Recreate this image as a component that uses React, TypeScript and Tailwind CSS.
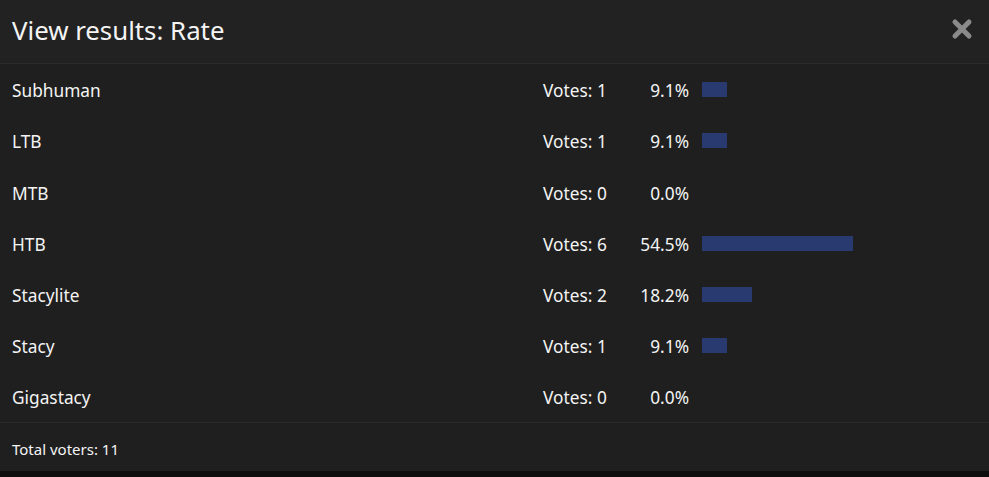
import React from "react";

const options = [
  { name: "Subhuman", votes: 1, pct: 9.1 },
  { name: "LTB", votes: 1, pct: 9.1 },
  { name: "MTB", votes: 0, pct: 0 },
  { name: "HTB", votes: 6, pct: 54.5 },
  { name: "Stacylite", votes: 2, pct: 18.2 },
  { name: "Stacy", votes: 1, pct: 9.1 },
  { name: "Gigastacy", votes: 0, pct: 0 },
];

export default function App() {
  return (
    <div
      className="w-[989px] h-[477px] bg-[#0e0e0e] text-[#f4f4f4]"
      style={{ fontFamily: '"Noto Sans", "Open Sans", Arial, sans-serif' }}
    >
      <div className="flex items-center justify-between h-[64px] px-3 bg-[#222222] border-b border-[#2c2c2c]">
        <h1 className="text-[25.8px] leading-none pb-[2px]">View results: Rate</h1>
        <button className="mr-[4px] mb-[6px] text-[#8a8a8a]" aria-label="Close">
          <svg width="22" height="22" viewBox="0 0 22 22">
            <path d="M4 4 L18 18 M18 4 L4 18" stroke="currentColor" strokeWidth="5" strokeLinecap="round" />
          </svg>
        </button>
      </div>

      <div className="bg-[#1f1f1f]">
        {options.map((o) => (
          <div key={o.name} className="flex items-center h-[51.2px] px-3 text-[17.3px]">
            <div className="flex-1 pt-[3px]">{o.name}</div>
            <div className="w-[85px] pt-[3px]">Votes: {o.votes}</div>
            <div className="w-[61px] pt-[3px] text-right">{o.pct.toFixed(1)}%</div>
            <div className="ml-[13px] w-[275px] h-[15px]">
              {o.pct > 0 && (
                <div className="h-full bg-[#283a70]" style={{ width: `${(o.pct / 100) * 277}px` }} />
              )}
            </div>
          </div>
        ))}
      </div>

      <div className="flex items-center h-[50px] px-3 pt-[3px] bg-[#1f1f1f] border-t border-[#2a2a2a] border-b border-b-[#0e0e0e] text-[15px]">
        Total voters: 11
      </div>
    </div>
  );
}
